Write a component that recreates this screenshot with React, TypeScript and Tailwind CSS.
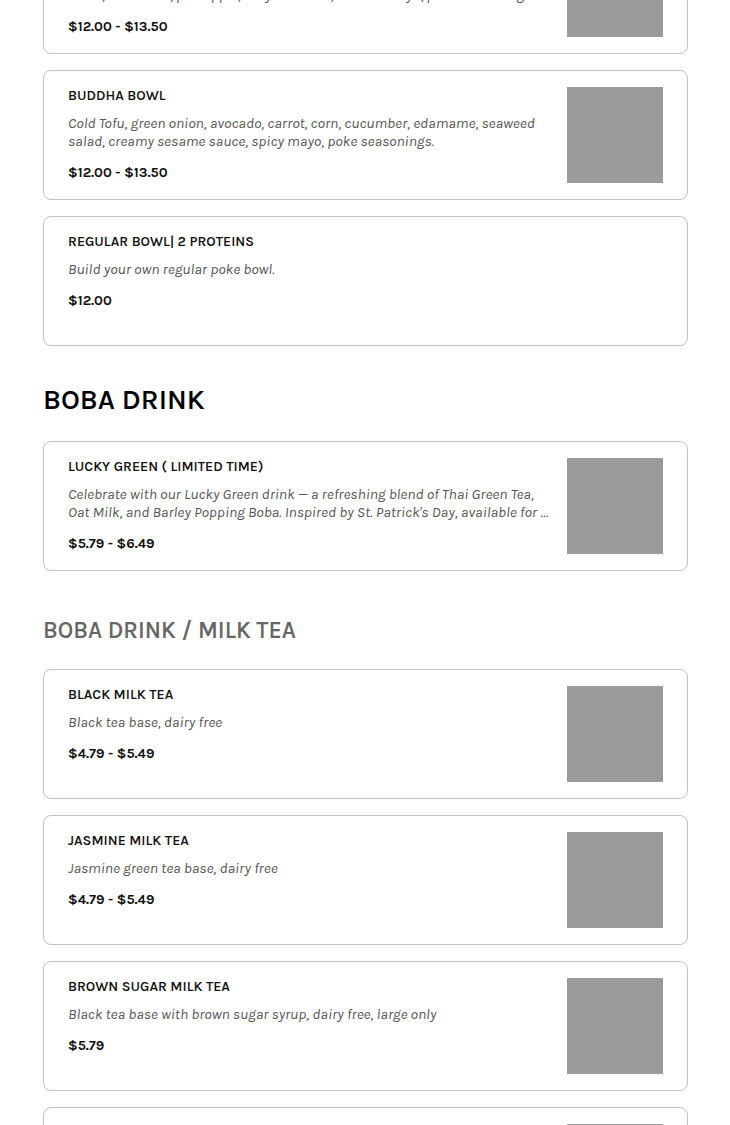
type Item = {
  name: string;
  desc: string;
  price: string;
  image?: boolean;
  faded?: boolean;
};

type Section = {
  title?: string;
  titleClass?: string;
  items: Item[];
};

const sections: Section[] = [
  {
    items: [
      {
        name: "Signature Bowl",
        desc: "Salmon, green onion, avocado, carrot, corn, cucumber, masago, seaweed salad, edamame, pineapple, teriyaki sauce, classic shoyu, poke seasonings.",
        price: "$12.00 - $13.50",
        image: true,
      },
      {
        name: "Buddha Bowl",
        desc: "Cold Tofu, green onion, avocado, carrot, corn, cucumber, edamame, seaweed salad, creamy sesame sauce, spicy mayo, poke seasonings.",
        price: "$12.00 - $13.50",
        image: true,
      },
      {
        name: "Regular Bowl| 2 Proteins",
        desc: "Build your own regular poke bowl.",
        price: "$12.00",
      },
    ],
  },
  {
    title: "BOBA DRINK",
    titleClass: "mt-[38px] text-[28px] leading-[32px] text-black",
    items: [
      {
        name: "Lucky Green ( Limited Time)",
        desc: "Celebrate with our Lucky Green drink — a refreshing blend of Thai Green Tea, Oat Milk, and Barley Popping Boba. Inspired by St. Patrick's Day, available for a limited time only.",
        price: "$5.79 - $6.49",
        image: true,
      },
    ],
  },
  {
    title: "BOBA DRINK / MILK TEA",
    titleClass: "mt-[47px] text-[23px] leading-[26px] text-[#666]",
    items: [
      { name: "Black Milk Tea", desc: "Black tea base, dairy free", price: "$4.79 - $5.49", image: true },
      { name: "Jasmine Milk Tea", desc: "Jasmine green tea base, dairy free", price: "$4.79 - $5.49", image: true },
      {
        name: "Brown Sugar Milk Tea",
        desc: "Black tea base with brown sugar syrup, dairy free, large only",
        price: "$5.79",
        image: true,
      },
      { name: "Honeydew Milk Tea", desc: "Green tea base, dairy free", price: "$4.79 - $5.49", image: true, faded: true },
    ],
  },
];

function MenuCard({ item }: { item: Item }) {
  return (
    <div className="flex min-h-[130px] gap-4 rounded-lg border border-[#c2c2c2] bg-white px-6 py-4">
      <div className={"min-w-0 flex-1 " + (item.faded ? "opacity-25" : "")}>
        <div className="text-[14px] font-semibold uppercase leading-[17px] text-[#111]">{item.name}</div>
        <p className="mt-[10px] line-clamp-2 text-[15px] italic leading-[18px] text-[#555]">{item.desc}</p>
        <div className="mt-[14px] text-[14px] font-bold leading-[18px] text-[#111]">{item.price}</div>
      </div>
      {item.image && <div className="h-24 w-24 shrink-0 bg-[#9b9b9b]" />}
    </div>
  );
}

export default function App() {
  return (
    <div className="h-[1125px] overflow-hidden bg-white" style={{ fontFamily: "Karla, 'Open Sans', sans-serif" }}>
      <div className="ml-[43px] mr-[42px] mt-[-76px] pb-10">
        {sections.map((s, i) => (
          <section key={i}>
            {s.title && <h2 className={"mb-[25px] font-semibold " + s.titleClass}>{s.title}</h2>}
            <div className="flex flex-col gap-4">
              {s.items.map((it) => (
                <MenuCard key={it.name} item={it} />
              ))}
            </div>
          </section>
        ))}
      </div>
    </div>
  );
}
